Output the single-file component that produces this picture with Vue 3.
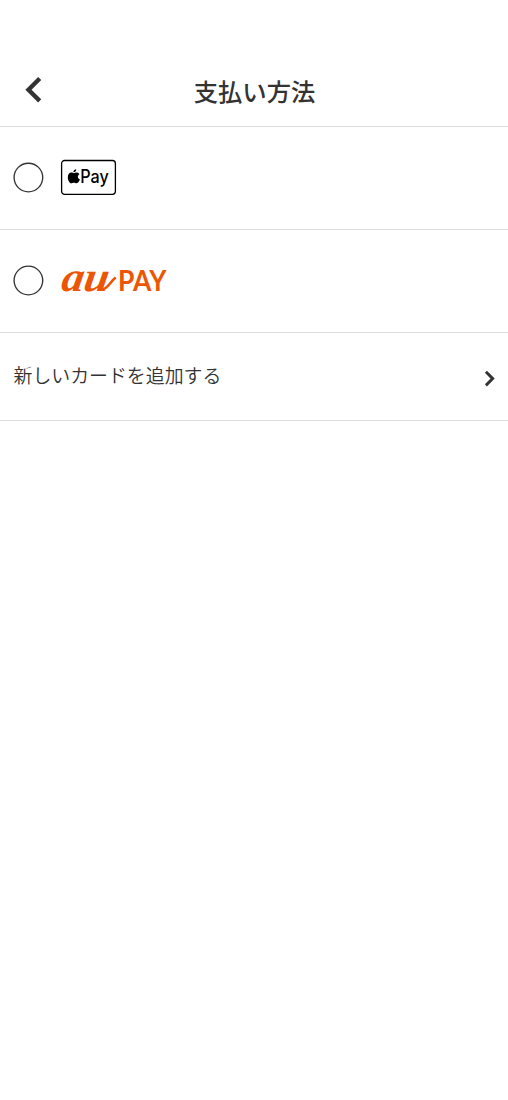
<script setup>
const methods = ['apple', 'au']
</script>

<template>
  <main class="screen">
    <header class="header">
      <button class="back" aria-label="戻る">
        <svg width="20" height="28" viewBox="0 0 20 28"><path d="M16.7 3.5 5.5 14.7l11.2 11.2" fill="none" stroke="#333" stroke-width="4.4" /></svg>
      </button>
      <h1>支払い方法</h1>
    </header>
    <label v-for="method in methods" :key="method" class="method">
      <svg class="radio" width="32" height="32" viewBox="0 0 32 32"><circle cx="16.4" cy="16.5" r="14.3" fill="#fff" stroke="#333" stroke-width="1.35" /></svg>
      <svg v-if="method === 'apple'" class="brand" width="56" height="36" viewBox="0 0 56 36">
        <rect x="1.6" y="1.5" width="53.8" height="33.8" rx="3" fill="#fff" stroke="#000" stroke-width="1.3" />
        <path d="M16.2 10.2c.1 1.8-1.3 3.2-2.8 3.1-.2-1.6 1.2-3 2.8-3.1ZM19.4 15.2c-2.2 1.4-1.9 4.3.5 5.3-.6 1.7-1.8 3.7-3.3 3.7-1 0-1.6-.5-2.8-.5s-1.6.5-2.6.5c-1.8 0-3.4-3.4-3.4-5.8 0-2.8 1.7-4.8 3.5-4.8 1.1 0 2 .7 2.7.7.6 0 1.6-.7 3-.7.9 0 1.9.8 2.4 1.6Z" />
        <text class="apple-text" x="20.2" y="24" textLength="28.5" lengthAdjust="spacingAndGlyphs">Pay</text>
      </svg>
      <svg v-else class="brand" width="108" height="30" viewBox="0 0 108 30">
        <g transform="translate(.2 25.7) skewX(-9)">
          <text class="au-text" x="0" y="0" textLength="47" lengthAdjust="spacingAndGlyphs">au</text>
        </g>
        <path d="M41 24.7C47.5 25 50.5 16 55.7 12.5" fill="none" stroke="#eb5505" stroke-width="2.6" />
        <text class="pay-text" x="57.9" y="25.9" textLength="48.6" lengthAdjust="spacingAndGlyphs">PAY</text>
      </svg>
    </label>
    <div class="add">
      <span>新しいカードを追加する</span>
      <svg width="12" height="18" viewBox="0 0 12 18"><path d="m1.9 2.8 6.8 6.8-6.8 6.8" fill="none" stroke="#333" stroke-width="2.9" /></svg>
    </div>
  </main>
</template>

<style>
body { margin: 0; background: #fff; }
</style>

<style scoped>
.screen { min-height: 1100px; box-sizing: border-box; color: #333; font-family: "Noto Sans CJK JP", sans-serif; }
.header { display: grid; grid-template-columns: 60px 1fr 60px; height: 127px; padding-top: 56px; box-sizing: border-box; align-items: center; border-bottom: 1px solid #ddd; }
.back { display: flex; padding: 0 0 4px 23px; border: 0; background: none; }
h1 { margin: 0; text-align: center; font-size: 24.3px; line-height: 36px; font-weight: 500; padding-left: 1px; }
.method { display: flex; height: 103px; box-sizing: border-box; align-items: center; padding: 0 0 2px 12px; border-bottom: 1px solid #ddd; }
.brand { margin-left: 16px; overflow: visible; }
.apple-text { font: 500 18px Inter, sans-serif; }
.au-text { font: italic 700 42px "Liberation Serif", serif; fill: #eb5505; }
.pay-text { font: 700 28px Lato, sans-serif; fill: #eb5505; }
.add { display: flex; height: 88px; box-sizing: border-box; align-items: center; justify-content: space-between; padding: 2px 12px 0 13.5px; border-bottom: 1px solid #ddd; font-size: 18.9px; font-weight: 350; }
.add span { line-height: 28px; padding-bottom: 6px; }
</style>
